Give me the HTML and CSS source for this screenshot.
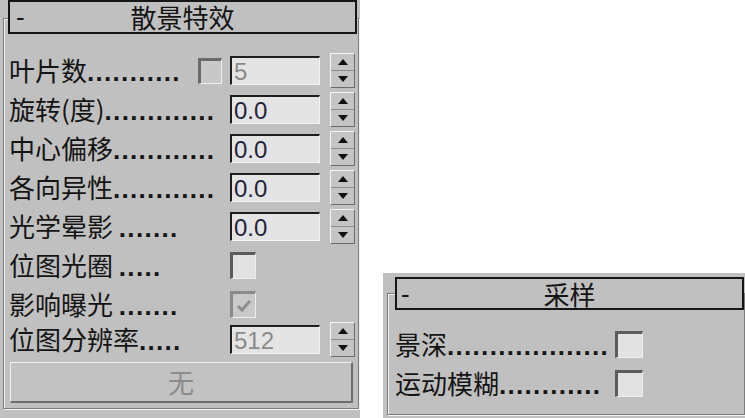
FILE: index.html
```html
<!DOCTYPE html>
<html lang="zh-CN">
<head>
    <meta charset="UTF-8">
    <title>散景特效 / 采样</title>
    <link rel="stylesheet" href="styles.css">
</head>
<body>
    <div class="desk">
        <!-- 散景特效 卷展栏 -->
        <section class="rollout rollout-bokeh">
            <div class="frame frame-bokeh">
                <div class="rollout-head head-bokeh">
                    <span class="head-toggle">-</span>
                    <span class="head-title">散景特效</span>
                    <span></span>
                </div>

                <div class="rollout-body body-bokeh">
                    <div class="row">
                        <span class="label label-short">叶片数<span class="dots">...........</span></span>
                        <span class="checkbox checkbox-off checkbox-slot"></span>
                        <span class="field field-off">5</span>
                        <span class="spinner"><i class="arrow-up"></i><i class="arrow-down"></i></span>
                    </div>
                    <div class="row">
                        <span class="label">旋转(度)<span class="dots">.............</span></span>
                        <span class="field">0.0</span>
                        <span class="spinner"><i class="arrow-up"></i><i class="arrow-down"></i></span>
                    </div>
                    <div class="row">
                        <span class="label">中心偏移<span class="dots">............</span></span>
                        <span class="field">0.0</span>
                        <span class="spinner"><i class="arrow-up"></i><i class="arrow-down"></i></span>
                    </div>
                    <div class="row">
                        <span class="label">各向异性<span class="dots">............</span></span>
                        <span class="field">0.0</span>
                        <span class="spinner"><i class="arrow-up"></i><i class="arrow-down"></i></span>
                    </div>
                    <div class="row">
                        <span class="label">光学晕影 <span class="dots">.......</span></span>
                        <span class="field">0.0</span>
                        <span class="spinner"><i class="arrow-up"></i><i class="arrow-down"></i></span>
                    </div>
                    <div class="row">
                        <span class="label">位图光圈 <span class="dots">.....</span></span>
                        <span class="checkbox"></span>
                    </div>
                    <div class="row">
                        <span class="label">影响曝光 <span class="dots">.......</span></span>
                        <span class="checkbox checkbox-dim">
                            <svg width="16" height="14" viewBox="0 0 16 14"><path d="M2 7 L6 11 L14 2" fill="none" stroke="#8e8e8e" stroke-width="3"/></svg>
                        </span>
                    </div>
                    <div class="row row-tight">
                        <span class="label">位图分辨率<span class="dots">.....</span></span>
                        <span class="field field-off">512</span>
                        <span class="spinner"><i class="arrow-up"></i><i class="arrow-down"></i></span>
                    </div>

                    <button class="map-button" disabled>无</button>
                </div>
            </div>
        </section>

        <!-- 采样 卷展栏 -->
        <section class="rollout rollout-sampling">
            <div class="frame frame-sampling">
                <div class="rollout-head head-sampling">
                    <span class="head-toggle">-</span>
                    <span class="head-title">采样</span>
                    <span></span>
                </div>

                <div class="rollout-body body-sampling">
                    <div class="row">
                        <span class="label label-wide">景深<span class="dots">...................</span></span>
                        <span class="checkbox checkbox-big"></span>
                    </div>
                    <div class="row">
                        <span class="label label-wide">运动模糊<span class="dots">............</span></span>
                        <span class="checkbox checkbox-big"></span>
                    </div>
                </div>
            </div>
        </section>
    </div>
</body>
</html>
```

FILE: styles.css
```css
body {
    margin: 0;
    background: #ffffff;
    color: #141414;
    font-family: "Noto Sans CJK SC", "Liberation Sans", sans-serif;
    overflow: hidden;
}
.desk {
    display: flex;
    align-items: flex-start;
    width: 745px;
    height: 418px;
}
.rollout {
    background: #c0c0c0;
    box-sizing: border-box;
}
.rollout-bokeh {
    width: 360px;
    height: 418px;
    padding: 18px 0 0 3px;
}
.rollout-sampling {
    width: 362px;
    height: 145px;
    margin: 273px 0 0 23px;
    padding: 20px 0 0 4px;
}
.frame {
    box-sizing: border-box;
    border: 1px solid #7c7c7c;
    box-shadow: inset 1px 1px 0 #f2f2f2, 1px 1px 0 #f2f2f2;
}
.frame-bokeh {
    width: 356px;
    height: 391px;
}
.frame-sampling {
    width: 358px;
    height: 122px;
}

/* 标题栏 */
.rollout-head {
    display: grid;
    grid-template-columns: 1fr auto 1fr;
    align-items: center;
    box-sizing: border-box;
    border: 2px solid #161616;
    background: #c0c0c0;
    line-height: 30px;
}
.head-bokeh {
    height: 34px;
    margin: -19px 1px 0 4px;
}
.head-sampling {
    height: 33px;
    margin: -17px 0 0 7px;
}
.head-toggle {
    font-family: "Liberation Sans", sans-serif;
    font-size: 26px;
    padding-left: 6px;
}
.head-sampling .head-toggle {
    padding-left: 4px;
}
.head-title {
    font-size: 26px;
}

/* 内容 */
.body-bokeh {
    padding: 17px 0 0 5px;
}
.body-sampling {
    padding: 15px 0 0 7px;
}
.row {
    display: flex;
    align-items: center;
    height: 39px;
}
.row-tight {
    margin-top: -4px;
}
.label {
    width: 221px;
    font-size: 26px;
    line-height: 39px;
    white-space: nowrap;
    overflow: hidden;
    flex: none;
}
.label-short {
    width: 189px;
}
.label-wide {
    width: 220px;
}
.dots {
    font-family: "Liberation Sans", sans-serif;
    font-weight: bold;
    letter-spacing: 1.3px;
}

/* 输入框 */
.field {
    box-sizing: border-box;
    width: 90px;
    height: 29px;
    padding: 0 0 0 2px;
    border-top: 2px solid #1e1e1e;
    border-left: 2px solid #1e1e1e;
    border-right: 1px solid #f4f4f4;
    border-bottom: 1px solid #f4f4f4;
    background: #e4e4e4;
    color: #23233c;
    font-family: "Liberation Sans", sans-serif;
    font-size: 24px;
    line-height: 27px;
    margin-right: 10px;
}
.field-off {
    color: #8a8a8a;
}

/* 微调按钮 */
.spinner {
    box-sizing: border-box;
    display: flex;
    flex-direction: column;
    width: 25px;
    height: 35px;
    border-top: 1px solid #f4f4f4;
    border-left: 1px solid #f4f4f4;
    border-right: 1px solid #6c6c6c;
    border-bottom: 1px solid #6c6c6c;
    background: #c4c4c4;
}
.spinner i {
    flex: 1;
    display: flex;
    justify-content: center;
    align-items: center;
}
.arrow-up {
    border-bottom: 1px solid #8c8c8c;
}
.arrow-up::before {
    content: "";
    border-left: 5px solid transparent;
    border-right: 5px solid transparent;
    border-bottom: 6px solid #111;
}
.arrow-down::before {
    content: "";
    border-left: 5px solid transparent;
    border-right: 5px solid transparent;
    border-top: 6px solid #111;
}

/* 复选框 */
.checkbox {
    box-sizing: border-box;
    display: flex;
    align-items: center;
    justify-content: center;
    width: 26px;
    height: 27px;
    border-top: 3px solid #5c5c5c;
    border-left: 3px solid #5c5c5c;
    border-right: 1px solid #eeeeee;
    border-bottom: 1px solid #eeeeee;
    background: #e2e2e2;
}
.checkbox-slot {
    width: 24px;
    height: 26px;
    margin-right: 8px;
}
.checkbox-off {
    background: #c8c8c8;
    border-top-color: #6a6a6a;
    border-left-color: #6a6a6a;
}
.checkbox-dim {
    background: #c9c9c9;
    border-top-color: #8a8a8a;
    border-left-color: #8a8a8a;
}
.checkbox-big {
    width: 28px;
    height: 27px;
}

/* 贴图按钮 */
.map-button {
    display: block;
    box-sizing: border-box;
    width: 343px;
    height: 41px;
    margin: 3px 0 0 1px;
    padding: 0;
    border-top: 1px solid #f2f2f2;
    border-left: 1px solid #f2f2f2;
    border-right: 2px solid #6e6e6e;
    border-bottom: 2px solid #6e6e6e;
    background: #c2c2c2;
    color: #8c8c8c;
    font-family: "Noto Sans CJK SC", sans-serif;
    font-size: 26px;
    line-height: 1;
}
```
